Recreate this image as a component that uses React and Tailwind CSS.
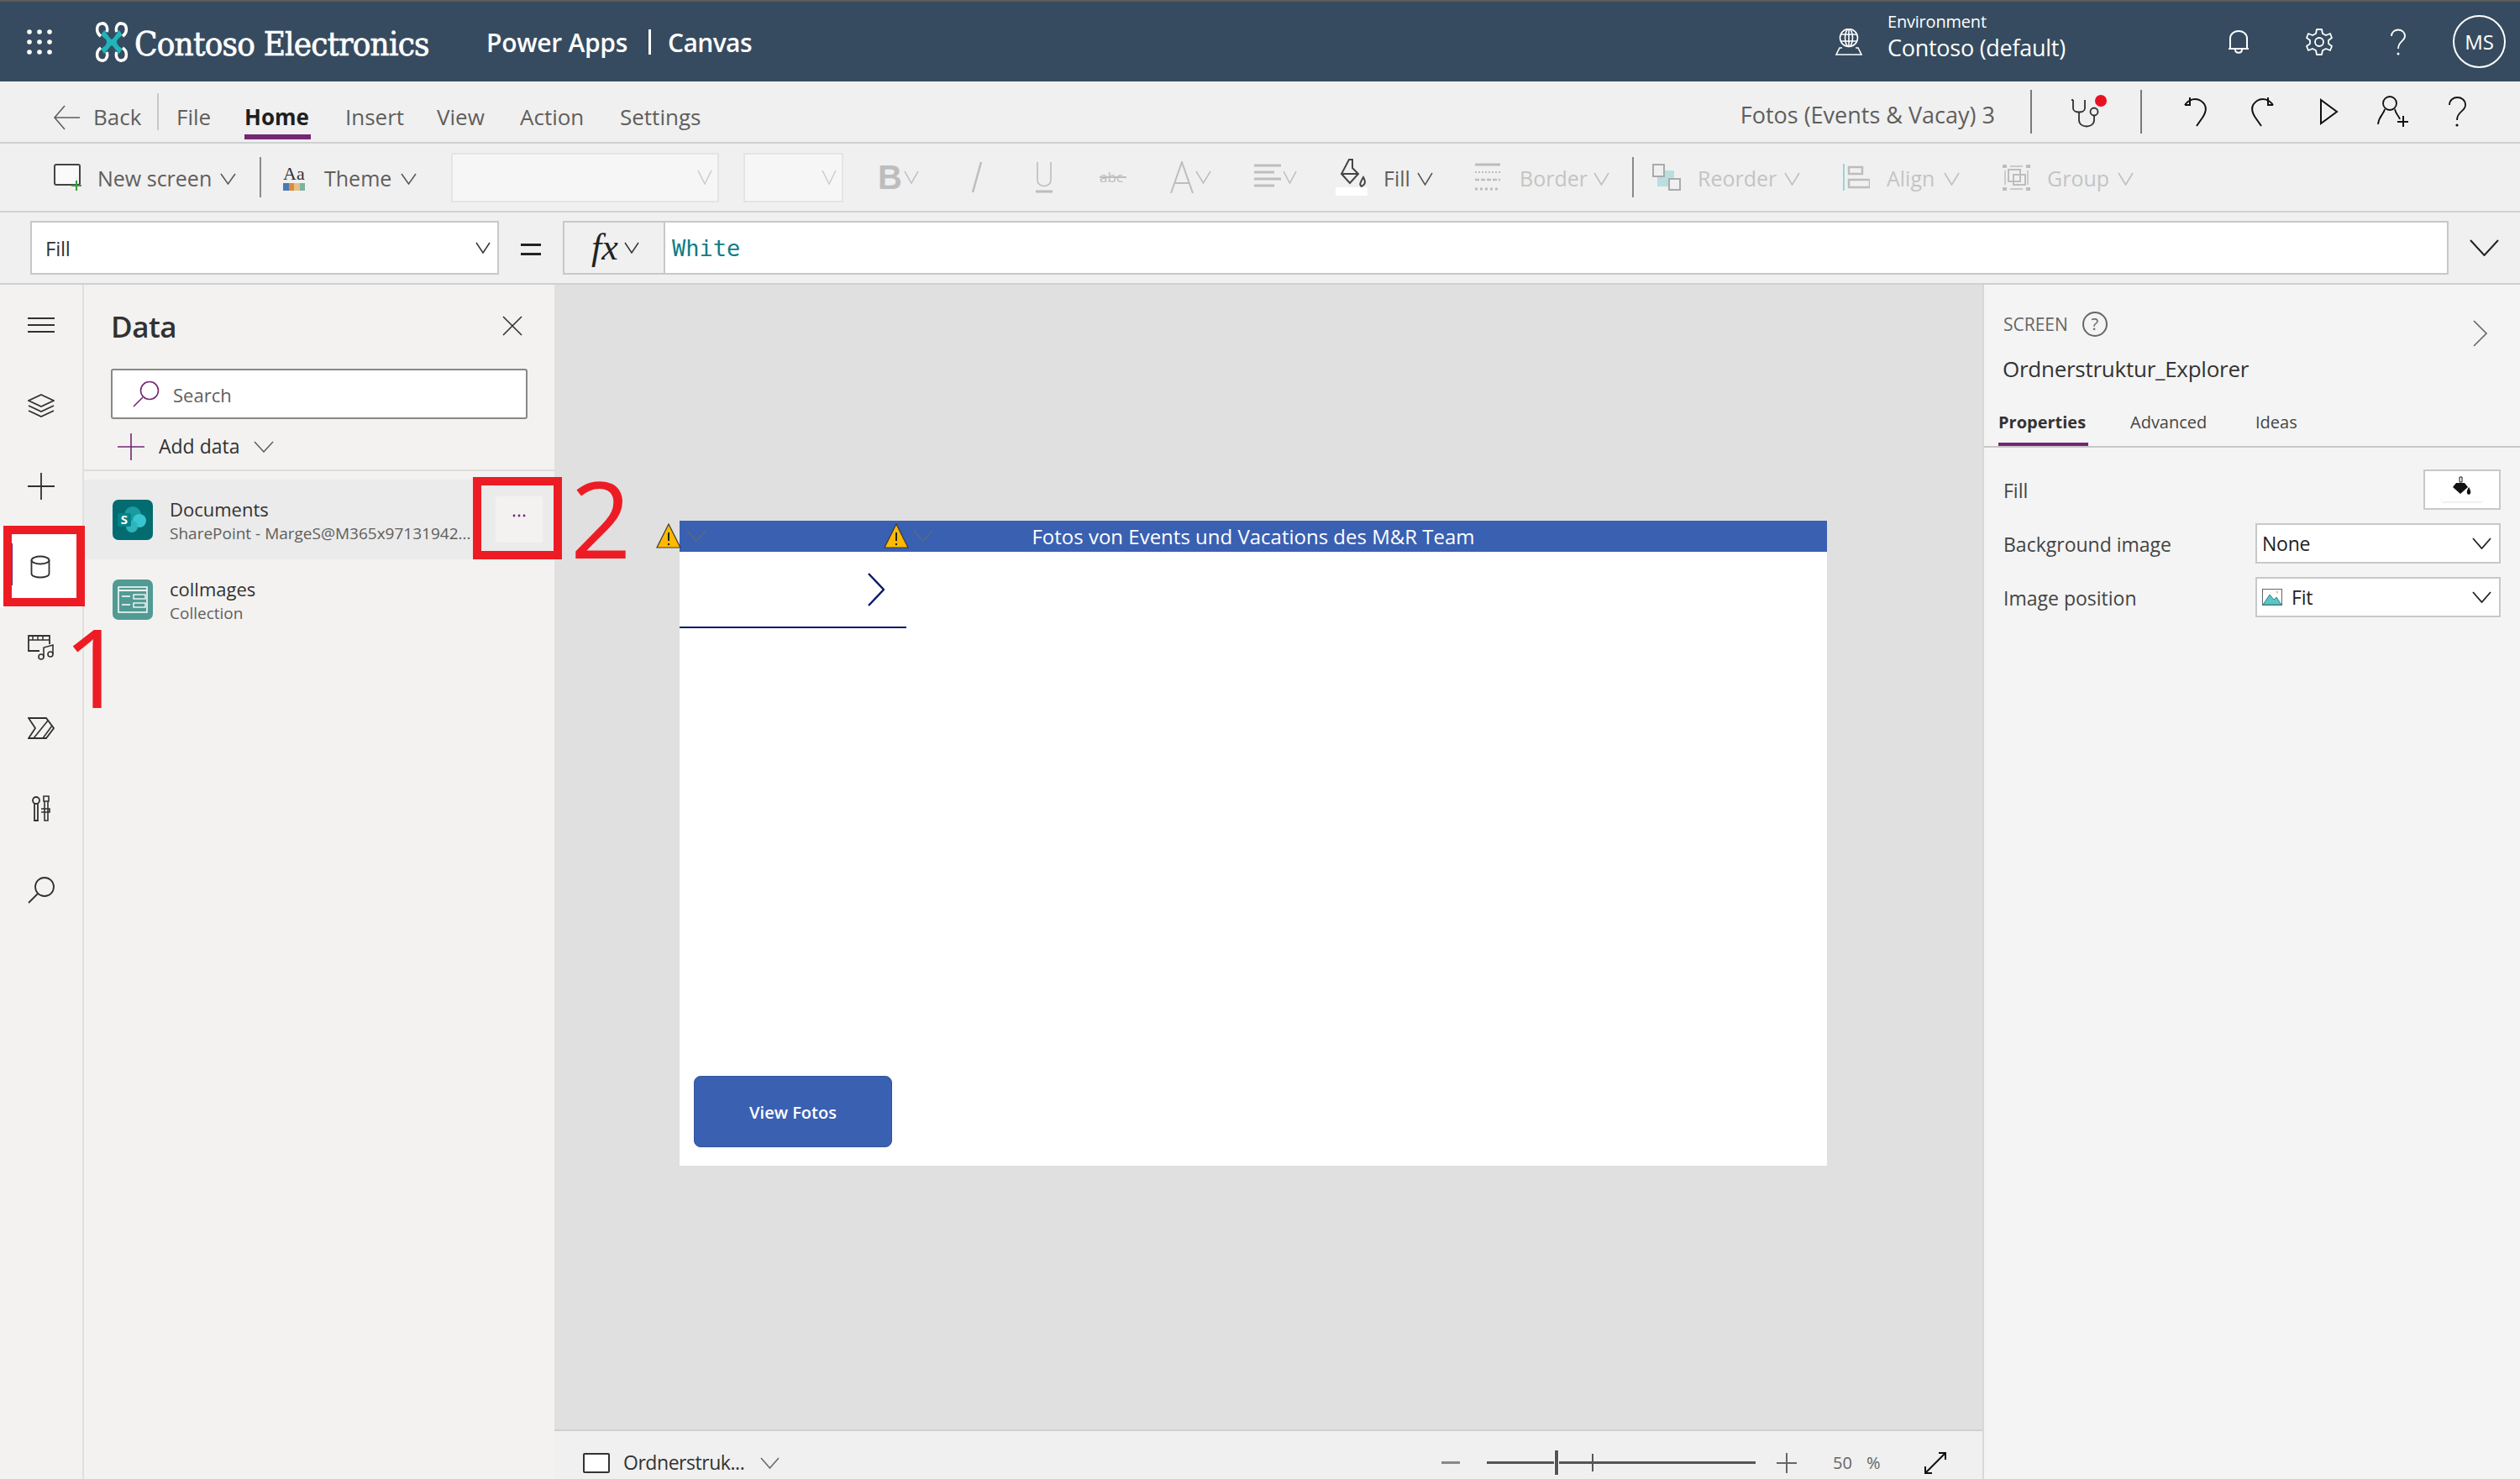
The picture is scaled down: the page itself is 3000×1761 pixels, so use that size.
import React from "react";

const Chev = ({ w = 18, h = 14, c = "#555", sw = 1.5, className = "" }) => (
  <svg width={w} height={h} viewBox={`0 0 ${w} ${h}`} fill="none" className={"shrink-0 " + className}>
    <path d={`M1 1L${w / 2} ${h - 1}L${w - 1} 1`} stroke={c} strokeWidth={sw} />
  </svg>
);

const Ic = ({ w = 32, h = 32, children, className = "" }) => (
  <svg width={w} height={h} viewBox={`0 0 ${w} ${h}`} fill="none" className={"shrink-0 " + className}>
    {children}
  </svg>
);

const K = "#323130";

function Logo() {
  return (
    <Ic w={42} h={48}>
      <path d="M12 10C17 16 18 19 21 21C24 19 25 16 30 10L34 16C29 20 27 21 27 24C27 27 30 30 34 32L30 38C25 33 24 30 21 28C18 30 17 33 12 38L8 32C12 30 15 27 15 24C15 21 13 20 8 16Z" fill="#1fb5b9" />
      <g stroke="#fff" strokeWidth="3.5" fill="none">
        <path d="M8 17C2 13 2 3 9 2C14 1 17 7 15 12" />
        <path d="M34 17C40 13 40 3 33 2C28 1 25 7 27 12" />
        <path d="M8 31C2 35 2 45 9 46C14 47 17 41 15 36" />
        <path d="M34 31C40 35 40 45 33 46C28 47 25 41 27 36" />
      </g>
    </Ic>
  );
}

function AppsDots() {
  const pts = [3, 15, 27];
  return (
    <Ic w={31} h={31}>
      {pts.map((y) => pts.map((x) => <circle key={x + "-" + y} cx={x} cy={y + 1} r="2.8" fill="#fff" />))}
    </Ic>
  );
}

function Header() {
  return (
    <header className="h-[97px] shrink-0 border-t-2 border-[#5c5c5c] bg-[#364b5f] flex items-center text-white">
      <div className="ml-[32px] w-[80px] shrink-0"><AppsDots /></div>
      <div className="w-[48px] shrink-0"><Logo /></div>
      <div className="w-[419px] shrink-0 mt-[5px] text-[40px] font-normal leading-none font-['DejaVu_Serif_Condensed','DejaVu_Serif',serif] tracking-[-0.02em] [-webkit-text-stroke:0.7px_white]">Contoso Electronics</div>
      <div className="w-[193px] shrink-0 mt-[2px] text-[30px] font-semibold tracking-[-0.01em]">Power Apps</div>
      <div className="w-[23px] shrink-0 h-[30px] border-l-[3px] border-white"></div>
      <div className="mt-[2px] text-[30px] font-semibold tracking-[-0.02em]">Canvas</div>
      <div className="ml-auto w-[64px] shrink-0">
        <Ic w={34} h={32}>
          <g stroke="#fff" strokeWidth="1.6">
            <circle cx="17" cy="11" r="10.5" />
            <ellipse cx="17" cy="11" rx="4.5" ry="10.5" />
            <path d="M7 7H27M7 15H27M17 0V22" />
            <path d="M9 23H6L2 31H32L28 23H25" />
          </g>
        </Ic>
      </div>
      <div className="w-[405px] shrink-0 flex flex-col -mt-[12px] -ml-[1px]">
        <div className="text-[20px] leading-[26px] tracking-[-0.01em]">Environment</div>
        <div className="text-[27px] leading-[35px] tracking-[-0.01em]">Contoso (default)</div>
      </div>
      <div className="w-[93px] shrink-0">
        <Ic w={26} h={30}>
          <path d="M3 23V11C3 -1 23 -1 23 11V23ZM1 23H25M9 24C9 29 17 29 17 24" stroke="#fff" strokeWidth="2" />
        </Ic>
      </div>
      <div className="w-[100px] shrink-0">
        <Ic w={32} h={32}>
          <circle cx="16" cy="16" r="5" stroke="#fff" strokeWidth="1.8" />
          <path d="M13 1H19L20 6L24 8L29 6L31 11L27 14V18L31 21L29 26L24 24L20 26L19 31H13L12 26L8 24L3 26L1 21L5 18V14L1 11L3 6L8 8L12 6Z" stroke="#fff" strokeWidth="1.8" strokeLinejoin="round" />
        </Ic>
      </div>
      <div className="w-[75px] shrink-0">
        <Ic w={20} h={32}>
          <path d="M2 9C2 -1 18 -1 18 9C18 15 10 15 10 24" stroke="#fff" strokeWidth="1.8" />
          <circle cx="10" cy="30" r="1.5" fill="#fff" />
        </Ic>
      </div>
      <div className="mr-[17px] w-[63px] h-[63px] shrink-0 rounded-full border-2 border-white flex items-center justify-center text-[24px]">MS</div>
    </header>
  );
}

function NavTab({ children, w }) {
  return <div className={w + " shrink-0 h-full flex items-center pt-[13px]"}><span>{children}</span></div>;
}

function NavRow() {
  return (
    <div className="h-[74px] shrink-0 bg-[#f0f0f0] border-b-2 border-[#d0d0d0] flex items-center text-[26px] text-[#605e5c]">
      <div className="ml-[63px] w-[48px] shrink-0 pt-[13px]">
        <Ic w={32} h={30}>
          <path d="M14 1L2 15L14 29M2 15H32" stroke="#605e5c" strokeWidth="1.6" />
        </Ic>
      </div>
      <div className="w-[76px] shrink-0 pt-[13px]">Back</div>
      <div className="w-[23px] shrink-0 h-[44px] border-l-2 border-[#c8c8c8]"></div>
      <NavTab w="w-[81px]">File</NavTab>
      <div className="w-[120px] shrink-0 self-stretch relative flex items-center pt-[13px] font-bold text-[#201f1e]">
        Home
        <div className="absolute left-0 bottom-[3px] w-[79px] h-[6px] bg-[#742774]"></div>
      </div>
      <NavTab w="w-[109px]">Insert</NavTab>
      <NavTab w="w-[99px]">View</NavTab>
      <NavTab w="w-[119px]">Action</NavTab>
      <NavTab w="w-[100px]">Settings</NavTab>
      <div className="ml-auto mr-[42px] pt-[8px] text-[27px]">Fotos (Events &amp; Vacay) 3</div>
      <div className="w-[46px] shrink-0 h-[52px] border-l-2 border-[#7a7a7a]"></div>
      <div className="w-[85px] shrink-0">
        <Ic w={46} h={40}>
          <path d="M2 6H0M2 6V16C2 22 16 22 16 16V6" stroke={K} strokeWidth="1.8" transform="translate(3 0)" />
          <path d="M12 20V30C12 40 30 40 30 30V24" stroke={K} strokeWidth="1.8" />
          <circle cx="30" cy="20" r="4.5" stroke={K} strokeWidth="1.8" />
          <ellipse cx="38" cy="7" rx="7" ry="7" fill="#e81123" />
        </Ic>
      </div>
      <div className="w-[52px] shrink-0 h-[52px] border-l-2 border-[#7a7a7a]"></div>
      <div className="w-[79px] shrink-0">
        <Ic w={28} h={36}>
          <path d="M7 1V10H1M1 10C6 3 14 1 20 5C29 11 26 19 22 25L15 35" stroke="#111" strokeWidth="2" />
        </Ic>
      </div>
      <div className="w-[82px] shrink-0">
        <Ic w={28} h={36}>
          <path d="M21 1V10H27M27 10C22 3 14 1 8 5C-1 11 2 19 6 25L13 35" stroke="#111" strokeWidth="2" />
        </Ic>
      </div>
      <div className="w-[69px] shrink-0">
        <Ic w={23} h={32}>
          <path d="M2 2V30L21 16Z" stroke="#111" strokeWidth="2" />
        </Ic>
      </div>
      <div className="w-[85px] shrink-0">
        <Ic w={38} h={38}>
          <circle cx="15" cy="9" r="8" stroke="#111" strokeWidth="1.8" />
          <path d="M9 16C8 22 2 24 1 34M21 16C22 22 26 24 27 28" stroke="#111" strokeWidth="1.8" />
          <path d="M31 24V37M24 31H37" stroke="#111" strokeWidth="2" />
        </Ic>
      </div>
      <div className="mr-[64px] w-[21px] shrink-0">
        <Ic w={21} h={36}>
          <path d="M1 10C1 -2 20 -2 20 10C20 18 10 17 10 28" stroke="#111" strokeWidth="1.8" />
          <circle cx="10" cy="34" r="1.6" fill="#111" />
        </Ic>
      </div>
    </div>
  );
}

const G = "#bdbdbd";

function Ribbon() {
  return (
    <div className="h-[82px] shrink-0 bg-[#f0f0f0] border-b-2 border-[#d0d0d0] flex items-center text-[25px] text-[#605e5c]">
      <div className="ml-[64px] w-[52px] shrink-0">
        <Ic w={33} h={32}>
          <rect x="1" y="1" width="30" height="24" rx="2" stroke="#444" strokeWidth="2" fill="#fafafa" />
          <path d="M27 20V32M21 26H33" stroke="#3a9a3a" strokeWidth="2" />
        </Ic>
      </div>
      <div className="w-[146px] shrink-0 pt-[3px]">New screen</div>
      <div className="w-[47px] shrink-0 pt-[3px]"><Chev w={19} h={14} /></div>
      <div className="w-[28px] shrink-0 h-[48px] border-l-2 border-[#8a8a8a]"></div>
      <div className="w-[49px] shrink-0 flex flex-col items-start">
        <div className="font-['Liberation_Serif',serif] text-[22px] leading-[22px] text-[#333]">Aa</div>
        <div className="flex h-[9px] w-[26px]">
          <div className="flex-1 bg-[#4a7ab5]"></div>
          <div className="flex-1 bg-[#e08a3c]"></div>
          <div className="flex-1 bg-[#e5c08a]"></div>
          <div className="flex-1 bg-[#7ab59a]"></div>
        </div>
      </div>
      <div className="w-[91px] shrink-0 pt-[3px]">Theme</div>
      <div className="w-[60px] shrink-0 pt-[3px]"><Chev w={19} h={14} /></div>
      <div className="w-[319px] h-[59px] shrink-0 bg-[#f6f6f6] border-2 border-[#e4e4e4] flex items-center justify-end pr-[6px]">
        <Chev w={18} h={18} c="#ccc" />
      </div>
      <div className="ml-[29px] w-[119px] h-[59px] shrink-0 bg-[#f6f6f6] border-2 border-[#e4e4e4] flex items-center justify-end pr-[6px]">
        <Chev w={18} h={18} c="#ccc" />
      </div>
      <div className="ml-[41px] w-[31px] shrink-0 font-['Liberation_Sans',sans-serif] font-bold text-[#bdbdbd] text-[40px] leading-none">B</div>
      <div className="w-[80px] shrink-0"><Chev w={18} h={16} c={G} /></div>
      <div className="w-[77px] shrink-0">
        <Ic w={13} h={38}><path d="M12 1L2 37" stroke={G} strokeWidth="2.5" /></Ic>
      </div>
      <div className="w-[76px] shrink-0">
        <Ic w={20} h={38}>
          <path d="M2 1V22C2 32 18 32 18 22V1" stroke={G} strokeWidth="1.6" />
          <path d="M0 36H20" stroke={G} strokeWidth="3" />
        </Ic>
      </div>
      <div className="w-[84px] shrink-0 relative text-[17px] text-[#bdbdbd] h-[26px] leading-[26px]">
        abc
        <div className="absolute left-0 top-[12px] w-[32px] h-[2px] bg-[#bdbdbd]"></div>
      </div>
      <div className="w-[30px] shrink-0">
        <Ic w={28} h={38}><path d="M1 38L14 1L27 38M5 26H23" stroke={G} strokeWidth="2" /></Ic>
      </div>
      <div className="w-[70px] shrink-0"><Chev w={19} h={16} c={G} /></div>
      <div className="w-[34px] shrink-0">
        <Ic w={32} h={32}><path d="M0 2H32M0 10H24M0 18H32M0 26H24" stroke={G} strokeWidth="3" /></Ic>
      </div>
      <div className="w-[63px] shrink-0"><Chev w={17} h={16} c={G} /></div>
      <div className="w-[57px] shrink-0 relative">
        <Ic w={38} h={44}>
          <path d="M13 2H17V12L24 19L14 30L4 19Z" stroke="#444" strokeWidth="2" transform="translate(3 -1)" />
          <path d="M7 18H27" stroke="#444" strokeWidth="2" />
          <path d="M33 22C29 29 28 31 31 33C34 31 37 29 33 22Z" stroke="#444" strokeWidth="2" />
          <rect x="0" y="34" width="38" height="10" fill="#fff" stroke="none" />
        </Ic>
      </div>
      <div className="w-[40px] shrink-0 pt-[3px]">Fill</div>
      <div className="w-[69px] shrink-0 pt-[3px]"><Chev w={19} h={16} /></div>
      <div className="w-[53px] shrink-0">
        <Ic w={30} h={38}>
          <path d="M0 4H30" stroke={G} strokeWidth="3" />
          <path d="M0 13H30" stroke={G} strokeWidth="2" strokeDasharray="2 2" />
          <path d="M0 22H30" stroke={G} strokeWidth="2.5" strokeDasharray="5 2" />
          <path d="M0 33H30" stroke={G} strokeWidth="3" strokeDasharray="3 3" />
        </Ic>
      </div>
      <div className="w-[88px] shrink-0 pt-[3px] text-[#c4c4c4]">Border</div>
      <div className="w-[46px] shrink-0 pt-[3px]"><Chev w={19} h={16} c={G} /></div>
      <div className="w-[24px] shrink-0 h-[48px] border-l-2 border-[#8a8a8a]"></div>
      <div className="w-[54px] shrink-0">
        <Ic w={34} h={32}>
          <rect x="6" y="8" width="20" height="19" fill="#b9dfdf" />
          <rect x="1" y="1" width="13" height="14" stroke="#aaa" strokeWidth="2" fill="#f0f0f0" />
          <rect x="20" y="18" width="13" height="13" stroke="#aaa" strokeWidth="2" fill="#f0f0f0" />
        </Ic>
      </div>
      <div className="w-[103px] shrink-0 pt-[3px] text-[#c4c4c4]">Reorder</div>
      <div className="w-[70px] shrink-0 pt-[3px]"><Chev w={19} h={16} c={G} /></div>
      <div className="w-[52px] shrink-0">
        <Ic w={32} h={32}>
          <path d="M1 0V32" stroke="#9cd3d6" strokeWidth="2" />
          <rect x="7" y="4" width="16" height="8" stroke={G} strokeWidth="2.5" />
          <rect x="7" y="19" width="25" height="9" stroke={G} strokeWidth="2.5" />
        </Ic>
      </div>
      <div className="w-[68px] shrink-0 pt-[3px] text-[#c4c4c4]">Align</div>
      <div className="w-[70px] shrink-0 pt-[3px]"><Chev w={19} h={16} c={G} /></div>
      <div className="w-[53px] shrink-0">
        <Ic w={33} h={33}>
          <path d="M0 3H5M28 3H33M0 30H5M28 30H33" stroke={G} strokeWidth="4" />
          <path d="M3 8V25M30 8V25M9 3H24M9 30H24" stroke={G} strokeWidth="1.4" />
          <rect x="7" y="7" width="14" height="14" stroke={G} strokeWidth="2" />
          <rect x="13" y="13" width="14" height="12" stroke={G} strokeWidth="2" />
        </Ic>
      </div>
      <div className="w-[84px] shrink-0 pt-[3px] text-[#c4c4c4]">Group</div>
      <div className="pt-[3px]"><Chev w={19} h={16} c={G} /></div>
    </div>
  );
}

function FormulaBar() {
  return (
    <div className="h-[86px] shrink-0 bg-[#f0f0f0] border-b-2 border-[#d0d0d0] flex items-center">
      <div className="ml-[36px] w-[558px] h-[64px] shrink-0 bg-white border-2 border-[#c8c8c8] flex items-center justify-between pl-[16px] pr-[8px] text-[24px] text-[#333] tracking-[-0.01em]">
        <span className="pt-[2px]">Fill</span>
        <Chev w={18} h={14} c="#333" />
      </div>
      <div className="ml-[26px] w-[24px] h-[14px] shrink-0 border-y-[3px] border-[#222] mt-[3px]"></div>
      <div className="ml-[26px] w-[120px] h-[64px] shrink-0 bg-[#f0f0f0] border-2 border-r-0 border-[#c8c8c8] flex items-center pl-[32px] gap-[7px]">
        <span className="font-['Liberation_Serif',serif] italic text-[44px] leading-none text-[#222]">fx</span>
        <Chev w={18} h={14} c="#333" />
      </div>
      <div className="w-[2125px] h-[64px] shrink-0 bg-white border-2 border-[#c8c8c8] flex items-center pl-[8px] font-['DejaVu_Sans_Mono',monospace] text-[27px] text-[#0e7c86]">
        <span className="pt-[2px]">White</span>
      </div>
      <div className="ml-[25px]"><Chev w={35} h={20} c="#222" sw={2} /></div>
    </div>
  );
}

function RailItem({ children, active }) {
  return (
    <div className={"h-[96px] shrink-0 flex items-center justify-center relative " + (active ? "bg-white" : "")}>
      {active && <div className="absolute left-[12px] top-[20px] w-[3px] h-[50px] bg-[#742774]"></div>}
      {children}
    </div>
  );
}

function Rail() {
  return (
    <aside className="w-[100px] shrink-0 bg-[#f3f2f1] border-r-2 border-[#e1dfdd] flex flex-col">
      <RailItem>
        <Ic w={32} h={20}><path d="M0 2H32M0 10H32M0 18H32" stroke={K} strokeWidth="2" /></Ic>
      </RailItem>
      <RailItem>
        <Ic w={32} h={28}>
          <path d="M16 1L31 8L16 15L1 8Z" stroke={K} strokeWidth="1.8" />
          <path d="M1 14L16 21L31 14M1 20L16 27L31 20" stroke={K} strokeWidth="1.8" />
        </Ic>
      </RailItem>
      <RailItem>
        <Ic w={32} h={32}><path d="M16 0V32M0 16H32" stroke={K} strokeWidth="1.8" /></Ic>
      </RailItem>
      <RailItem active>
        <Ic w={24} h={28} className="-ml-[2px]">
          <ellipse cx="12" cy="6" rx="10.5" ry="4.5" stroke={K} strokeWidth="1.8" />
          <path d="M1.5 6V22C1.5 28 22.5 28 22.5 22V6" stroke={K} strokeWidth="1.8" />
        </Ic>
      </RailItem>
      <RailItem>
        <Ic w={32} h={30}>
          <path d="M14 19H1V1H26V11" stroke={K} strokeWidth="1.8" />
          <path d="M1 6H26M6 1V6M12 1V6M18 1V6" stroke={K} strokeWidth="1.5" />
          <circle cx="16" cy="26" r="3" stroke={K} strokeWidth="1.6" />
          <circle cx="27" cy="23" r="3" stroke={K} strokeWidth="1.6" />
          <path d="M19 26V15L30 12V23" stroke={K} strokeWidth="1.6" />
        </Ic>
      </RailItem>
      <RailItem>
        <Ic w={32} h={26}>
          <path d="M1 1H22L31 13L22 25H1L9 13Z" stroke={K} strokeWidth="1.8" />
          <path d="M24 4L7 25M29 10L18 25" stroke={K} strokeWidth="1.6" />
        </Ic>
      </RailItem>
      <RailItem>
        <Ic w={22} h={32}>
          <circle cx="5" cy="6" r="4" stroke={K} strokeWidth="1.8" />
          <path d="M3 10V30H7V10" stroke={K} strokeWidth="1.8" />
          <path d="M14 1H20V7H14ZM15 7V30H19V7M11 16H21V20H11" stroke={K} strokeWidth="1.6" />
        </Ic>
      </RailItem>
      <RailItem>
        <Ic w={33} h={33}>
          <circle cx="20" cy="13" r="11" stroke={K} strokeWidth="1.8" />
          <path d="M12 21L1 32" stroke={K} strokeWidth="1.8" />
        </Ic>
      </RailItem>
    </aside>
  );
}

function SpIcon() {
  return (
    <div className="w-[48px] h-[48px] shrink-0 rounded-[7px] bg-[#036c70] flex items-center justify-center">
      <Ic w={36} h={36}>
        <circle cx="18" cy="12" r="10" fill="#1a9ba1" />
        <circle cx="26" cy="19" r="8" fill="#37c6d0" />
        <circle cx="17" cy="26" r="7" fill="#2fb4bb" />
        <rect x="0" y="10" width="16" height="16" rx="2" fill="#038387" />
        <text x="8" y="23" fontSize="15" fontWeight="700" fill="#fff" textAnchor="middle" fontFamily="Open Sans">S</text>
      </Ic>
    </div>
  );
}

function CollIcon() {
  return (
    <div className="w-[48px] h-[48px] shrink-0 rounded-[7px] bg-[#519b94] flex items-center justify-center">
      <Ic w={36} h={32}>
        <rect x="1" y="1" width="34" height="30" stroke="#fff" strokeWidth="1.5" />
        <path d="M1 5H35" stroke="#fff" strokeWidth="2" />
        <path d="M5 12H15M5 22H15" stroke="#fff" strokeWidth="1.5" />
        <rect x="19" y="10" width="14" height="5" stroke="#fff" strokeWidth="1.3" />
        <rect x="19" y="20" width="14" height="5" stroke="#fff" strokeWidth="1.3" />
      </Ic>
    </div>
  );
}

function DataPanel() {
  return (
    <section className="w-[560px] shrink-0 bg-[#f3f2f1] flex flex-col text-[#323130]">
      <div className="h-[100px] shrink-0 flex items-center justify-between pl-[32px] pr-[38px]">
        <div className="text-[35px] font-semibold tracking-[-0.015em]">Data</div>
        <Ic w={24} h={24} className="-mt-[2px]"><path d="M1 1L23 23M23 1L1 23" stroke={K} strokeWidth="1.6" /></Ic>
      </div>
      <div className="ml-[32px] w-[496px] h-[60px] shrink-0 bg-white border-2 border-[#8a8886] rounded-[3px] flex items-center pl-[24px] gap-[16px]">
        <Ic w={32} h={32}>
          <circle cx="20" cy="12" r="10.5" stroke="#742774" strokeWidth="1.6" />
          <path d="M12 20L1 31" stroke="#742774" strokeWidth="1.6" />
        </Ic>
        <div className="text-[22px] text-[#605e5c] pt-[2px]">Search</div>
      </div>
      <div className="h-[60px] shrink-0 flex items-center pl-[40px] pt-[5px] text-[23px]">
        <Ic w={32} h={32}><path d="M16 0V32M0 16H32" stroke="#742774" strokeWidth="1.6" /></Ic>
        <span className="ml-[17px]">Add data</span>
        <Chev w={24} h={14} c="#605e5c" className="ml-[16px]" />
      </div>
      <div className="h-[2px] shrink-0 bg-[#dcdcdc]"></div>
      <div className="h-[95px] shrink-0 mt-[10px] bg-[#ebebeb] flex items-center pl-[34px]">
        <SpIcon />
        <div className="ml-[20px] flex flex-col w-[362px] overflow-hidden pt-[4px]">
          <div className="text-[22px] leading-[29px]">Documents</div>
          <div className="text-[19px] leading-[28px] whitespace-nowrap text-[#605e5c]">SharePoint - MargeS@M365x97131942...</div>
        </div>
        <div className="ml-[26px] w-[56px] h-[55px] shrink-0 rounded-[2px] bg-[#f3f2f1] flex items-center justify-center pb-[10px]">
          <Ic w={16} h={4}>
            <circle cx="2" cy="2" r="1.4" fill="#742774" />
            <circle cx="8" cy="2" r="1.4" fill="#742774" />
            <circle cx="14" cy="2" r="1.4" fill="#742774" />
          </Ic>
        </div>
      </div>
      <div className="h-[95px] shrink-0 flex items-center pl-[34px]">
        <CollIcon />
        <div className="ml-[20px] flex flex-col pt-[4px]">
          <div className="text-[22px] leading-[29px]">collmages</div>
          <div className="text-[19px] leading-[28px] text-[#605e5c]">Collection</div>
        </div>
      </div>
    </section>
  );
}

function Warn({ className }) {
  return (
    <svg width="30" height="30" viewBox="0 0 30 30" className={"absolute " + className}>
      <path d="M15 1L29 29H1Z" fill="#ffb900" stroke="#3a3a3a" strokeWidth="1.2" />
      <path d="M15 11V21" stroke="#222" strokeWidth="2" />
      <circle cx="15" cy="25" r="1.2" fill="#222" />
    </svg>
  );
}

function Canvas() {
  return (
    <main className="flex-1 min-w-0 flex flex-col">
      <div className="flex-1 bg-[#e0e0e0] pl-[149px] pt-[281px]">
        <div className="w-[1366px] h-[768px] bg-white flex flex-col relative">
          <div className="h-[37px] shrink-0 bg-[#3a60b2] flex items-center justify-center text-white text-[24px] leading-none">
            Fotos von Events und Vacations des M&amp;R Team
          </div>
          <Warn className="-left-[28px] top-[3px]" />
          <Warn className="left-[243px] top-[3px]" />
          <Chev w={24} h={14} c="#5a6a80" className="absolute left-[8px] top-[11px]" />
          <Chev w={24} h={14} c="#5a6a80" className="absolute left-[278px] top-[11px]" />
          <div className="h-[91px] w-[270px] shrink-0 border-b-2 border-[#0a1a6b] flex items-center justify-end pr-[26px]">
            <Ic w={20} h={40}><path d="M1 1L19 20L1 39" stroke="#0a1a6b" strokeWidth="2.5" /></Ic>
          </div>
          <div className="mt-[533px] ml-[17px] w-[236px] h-[85px] rounded-[8px] bg-[#3a60b2] border border-[#2f5597] flex items-center justify-center pt-[2px] text-white text-[20px] font-semibold">
            View Fotos
          </div>
        </div>
      </div>
      <div className="h-[59px] shrink-0 bg-[#f0f0f0] border-t-2 border-[#d0d0d0] flex items-center pt-[18px] text-[#444]">
        <div className="ml-[34px] w-[48px] shrink-0">
          <div className="w-[32px] h-[24px] bg-white border-2 border-[#333] rounded-[2px]"></div>
        </div>
        <div className="w-[163px] shrink-0 text-[23px] tracking-[-0.02em] text-[#333]">Ordnerstruk...</div>
        <Chev w={23} h={14} c="#666" />
        <div className="ml-[788px] w-[22px] h-[3px] bg-[#888] shrink-0"></div>
        <div className="ml-[32px] w-[320px] h-[3px] bg-[#555] shrink-0 relative">
          <div className="absolute left-[80px] -top-[13px] w-[6px] h-[29px] bg-[#555] border-x border-white"></div>
          <div className="absolute left-[125px] -top-[9px] w-[2px] h-[21px] bg-[#555]"></div>
        </div>
        <div className="ml-[22px] w-[27px] h-[24px] shrink-0 flex items-center justify-end">
          <Ic w={24} h={24}><path d="M12 0V24M0 12H24" stroke="#666" strokeWidth="2" /></Ic>
        </div>
        <div className="ml-[43px] w-[40px] shrink-0 text-[20px] text-[#666]">50</div>
        <div className="w-[68px] shrink-0 text-[20px] text-[#666]">%</div>
        <Ic w={28} h={28}>
          <path d="M2 26L26 2M18 2H26V10M2 18V26H10" stroke="#111" strokeWidth="2" />
        </Ic>
      </div>
    </main>
  );
}

function Dropdown({ children }) {
  return (
    <div className="w-[292px] h-[48px] shrink-0 bg-white border-2 border-[#c8c8c8] flex items-center pl-[6px] pr-[9px] text-[23px] text-[#222] tracking-[-0.01em]">
      {children}
      <Chev w={23} h={14} c="#222" sw={1.8} className="ml-auto" />
    </div>
  );
}

function PropsPanel() {
  return (
    <aside className="w-[640px] shrink-0 bg-[#f4f4f4] border-l-2 border-[#d8d8d8] flex flex-col text-[#444]">
      <div className="mt-[30px] h-[36px] shrink-0 flex items-center pl-[23px] pr-[38px]">
        <span className="text-[21px] text-[#666]">SCREEN</span>
        <div className="ml-[17px] w-[30px] h-[30px] rounded-full border-2 border-[#666] flex items-center justify-center text-[20px] text-[#666] leading-none -mt-[2px]">?</div>
        <Ic w={18} h={32} className="ml-auto mt-[20px]"><path d="M1 1L16 16L1 31" stroke="#666" strokeWidth="1.6" /></Ic>
      </div>
      <div className="mt-[15px] h-[38px] shrink-0 pl-[22px] text-[26px] leading-[38px] text-[#333] tracking-[-0.01em]">Ordnerstruktur_Explorer</div>
      <div className="mt-[25px] h-[50px] shrink-0 border-b-2 border-[#c8c8c8] flex pl-[17px] text-[20px] leading-[40px]">
        <div className="w-[157px] shrink-0 relative font-bold text-[#333]">
          Properties
          <div className="absolute left-0 top-[44px] w-[107px] h-[4px] bg-[#742774]"></div>
        </div>
        <div className="w-[149px] shrink-0">Advanced</div>
        <div>Ideas</div>
      </div>
      <div className="mt-[26px] h-[48px] shrink-0 flex items-center pl-[23px] pr-[23px] justify-between text-[23px]">
        <span className="pt-[2px]">Fill</span>
        <div className="w-[92px] h-[48px] bg-white border-2 border-[#c8c8c8] flex flex-col items-center pt-[6px]">
          <Ic w={24} h={24}>
            <path d="M9 1H12V7L10 7L9 7Z" stroke="#111" strokeWidth="1" />
            <path d="M5 8H15L19 13L10 21L1 13Z" fill="#111" />
            <path d="M20 13C17 18 17 21 20 22C23 21 23 18 20 13Z" fill="#111" />
          </Ic>
          <div className="w-[48px] h-[4px] mt-[2px] bg-white shadow-sm"></div>
        </div>
      </div>
      <div className="mt-[16px] h-[48px] shrink-0 flex items-center pl-[23px] pr-[23px] justify-between text-[23px]">
        <span className="pt-[2px]">Background image</span>
        <Dropdown><span className="pt-[1px]">None</span></Dropdown>
      </div>
      <div className="mt-[16px] h-[48px] shrink-0 flex items-center pl-[23px] pr-[23px] justify-between text-[23px]">
        <span className="pt-[2px]">Image position</span>
        <Dropdown>
          <Ic w={24} h={20} className="mr-[11px]">
            <rect x="0.5" y="0.5" width="23" height="19" fill="#fff" stroke="#666" />
            <path d="M1 19L9 7L14 13L17 10L23 19Z" fill="#5fc4c4" stroke="#2a8a8a" />
            <circle cx="18" cy="4" r="1" fill="#e8a33c" />
          </Ic>
          Fit
        </Dropdown>
      </div>
    </aside>
  );
}

function Annotations() {
  return (
    <>
      <div className="absolute left-[4px] top-[626px] w-[97px] h-[96px] border-[10px] border-[#ed1c24]"></div>
      <div className="absolute left-[563px] top-[568px] w-[106px] h-[98px] border-[10px] border-[#ed1c24]"></div>
      <div className="absolute left-[75px] top-[718px] text-[130px] leading-[150px] text-[#ed1c24]">1</div>
      <div className="absolute left-[679px] top-[541px] text-[127px] leading-[150px] text-[#ed1c24]">2</div>
    </>
  );
}

export default function App() {
  return (
    <div className="w-[3000px] h-[1761px] relative overflow-hidden flex flex-col bg-[#f0f0f0] font-['Open_Sans','Noto_Sans',sans-serif]">
      <Header />
      <NavRow />
      <Ribbon />
      <FormulaBar />
      <div className="flex-1 min-h-0 flex">
        <Rail />
        <DataPanel />
        <Canvas />
        <PropsPanel />
      </div>
      <Annotations />
    </div>
  );
}
